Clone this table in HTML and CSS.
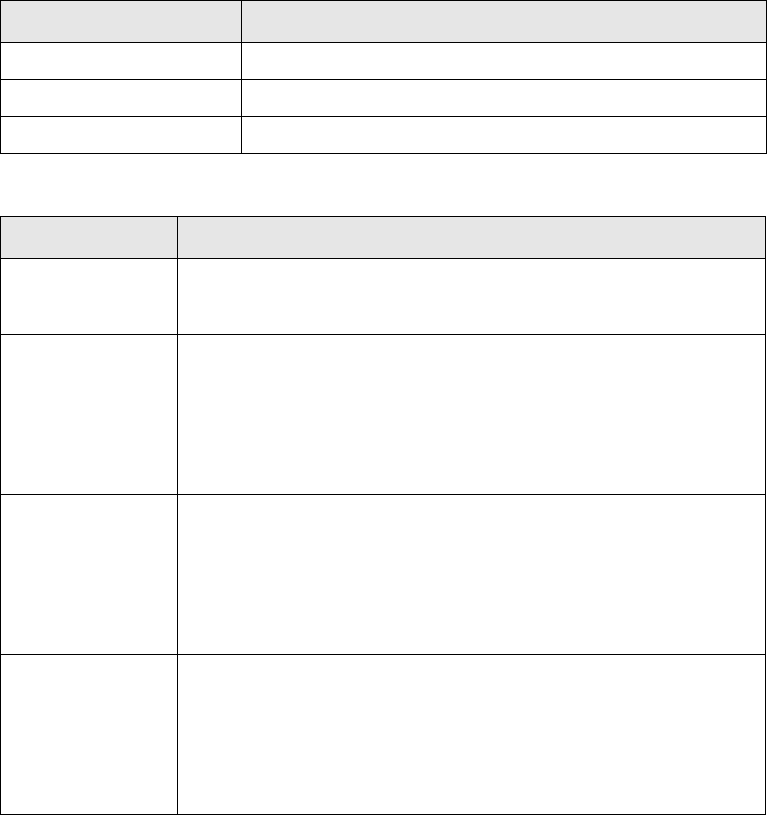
FILE: index.html
```html
<!DOCTYPE html>
<html>
<head>
<meta charset="utf-8">
<link rel="stylesheet" href="styles.css">
</head>
<body>
<div class="grid first">
  <div class="cell head"></div><div class="cell head"></div>
  <div class="cell"></div><div class="cell"></div>
  <div class="cell"></div><div class="cell"></div>
  <div class="cell"></div><div class="cell"></div>
</div>
<div class="grid second">
  <div class="cell head"></div><div class="cell head"></div>
  <div class="cell"></div><div class="cell"></div>
  <div class="cell"></div><div class="cell"></div>
  <div class="cell"></div><div class="cell"></div>
  <div class="cell"></div><div class="cell"></div>
</div>
</body>
</html>
```
FILE: styles.css
```css
html, body {
  margin: 0;
  padding: 0;
  background: #ffffff;
  font-family: "Liberation Sans", Arial, sans-serif;
}
.grid {
  display: grid;
  width: max-content;
  border-top: 1px solid #000;
  border-left: 1px solid #000;
}
.first {
  grid-template-columns: 241px 525px;
  grid-template-rows: 42px 37px 37px 37px;
}
.second {
  margin-top: 62px;
  grid-template-columns: 177px 588px;
  grid-template-rows: 42px 76px 160px 160px 160px;
}
.cell {
  box-sizing: border-box;
  border-right: 1px solid #000;
  border-bottom: 1px solid #000;
  background: #ffffff;
}
.cell.head {
  background: #e6e6e6;
}
```
